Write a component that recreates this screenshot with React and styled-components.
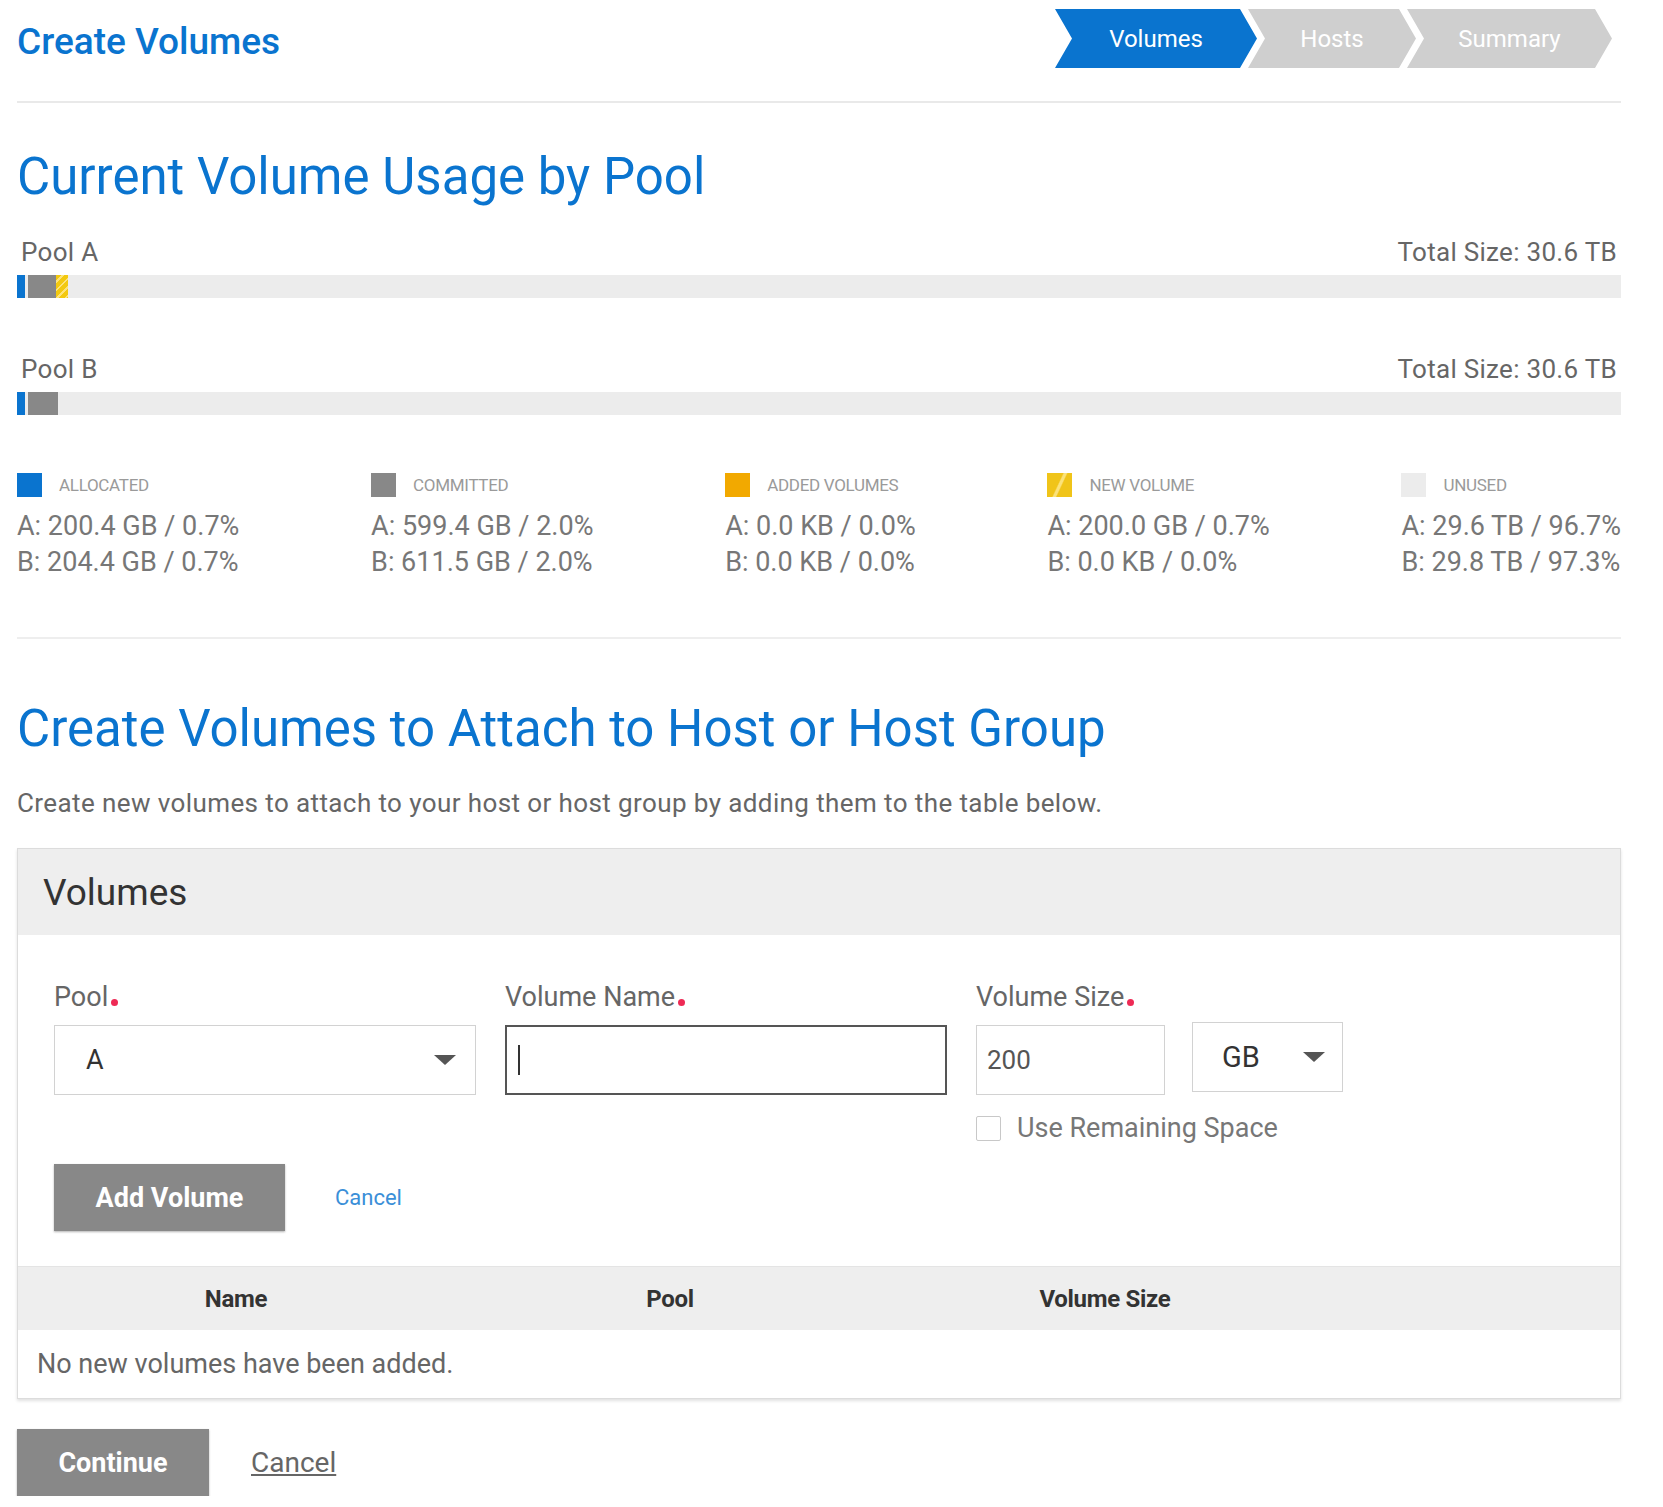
import React from "react";
import styled, { createGlobalStyle } from "styled-components";

const BLUE = "#0a74cf";

const GlobalStyle = createGlobalStyle`
  html, body { margin: 0; padding: 0; background: #fff; }
  body { font-family: Roboto, "Liberation Sans", Arial, sans-serif; color: #555; }
  * { box-sizing: border-box; }
`;

const Page = styled.div`
  width: 1663px;
  padding: 0 42px 0 17px;
`;

const Header = styled.header`
  display: flex;
  justify-content: space-between;
  align-items: flex-start;
  height: 103px;
  padding-top: 9px;
  border-bottom: 2px solid #e9e9e9;
`;

const PageTitle = styled.h1`
  margin: 12px 0 0;
  font-size: 37px;
  line-height: 42px;
  font-weight: 500;
  color: ${BLUE};
`;

const Steps = styled.nav`
  display: flex;
  margin-right: 9px;
`;

const Step = styled.div`
  width: ${(p) => p.$w}px;
  height: 59px;
  display: flex;
  align-items: center;
  justify-content: center;
  background: ${(p) => (p.$active ? BLUE : "#cfcfcf")};
  color: #fff;
  font-size: 24px;
  clip-path: polygon(0 0, calc(100% - 17px) 0, 100% 50%, calc(100% - 17px) 100%, 0 100%, 17px 50%);
  & + & { margin-left: -9px; }
`;

const SectionTitle = styled.h2`
  margin: ${(p) => p.$mt}px 0 0;
  font-size: 51px;
  line-height: 58px;
  font-weight: 400;
  color: ${BLUE};
`;

const PoolBlock = styled.div`
  margin-top: ${(p) => p.$mt}px;
`;

const PoolHead = styled.div`
  display: flex;
  justify-content: space-between;
  padding: 0 4px;
  font-size: 26px;
  line-height: 30px;
  letter-spacing: 0.3px;
  color: #666;
`;

const Bar = styled.div`
  display: flex;
  height: 23px;
  margin-top: 8px;
  background: #ececec;
`;

const Segment = styled.div`
  width: ${(p) => p.$w}px;
  margin-right: ${(p) => p.$gap || 0}px;
  background: ${(p) => p.$bg};
`;

const Legend = styled.div`
  display: flex;
  justify-content: space-between;
  margin-top: 58px;
`;

const LegendItem = styled.div`
  display: flex;
  flex-direction: column;
`;

const LegendHead = styled.div`
  display: flex;
  align-items: center;
  gap: 17px;
  height: 24px;
`;

const Swatch = styled.span`
  width: 25px;
  height: 24px;
  background: ${(p) => p.$bg};
`;

const LegendLabel = styled.span`
  font-size: 17px;
  color: #9a9a9a;
  text-transform: uppercase;
  letter-spacing: -0.3px;
`;

const LegendValues = styled.div`
  margin-top: 11px;
  font-size: 27px;
  line-height: 36px;
  color: #777;
  white-space: nowrap;
`;

const Divider = styled.hr`
  margin: 57px 0 0;
  border: 0;
  height: 2px;
  background: #eeeeee;
`;

const Description = styled.p`
  margin: 29px 0 0;
  font-size: 26px;
  line-height: 32px;
  color: #666;
  letter-spacing: 0.4px;
`;

const Panel = styled.section`
  margin-top: 29px;
  border: 1px solid #dcdcdc;
  box-shadow: 0 2px 3px rgba(0, 0, 0, 0.12);
  background: #fff;
`;

const PanelHeader = styled.div`
  height: 86px;
  display: flex;
  align-items: center;
  padding-left: 25px;
  background: #eeeeee;
  font-size: 37px;
  color: #333;
`;

const Form = styled.div`
  padding: 47px 36px 35px;
`;

const FieldRow = styled.div`
  display: flex;
  gap: 29px;
  align-items: flex-start;
`;

const Field = styled.div`
  display: flex;
  flex-direction: column;
`;

const Label = styled.label`
  display: block;
  margin-bottom: 13px;
  font-size: 27px;
  line-height: 30px;
  color: #666;
`;

const Required = styled.span`
  display: inline-block;
  width: 7px;
  height: 7px;
  margin-left: 3px;
  border-radius: 50%;
  background: #ee2a55;
`;

const SelectBox = styled.div`
  width: ${(p) => p.$w}px;
  height: 70px;
  display: flex;
  align-items: center;
  justify-content: space-between;
  padding: 0 ${(p) => p.$pr}px 0 ${(p) => p.$pl}px;
  border: 1px solid #d2d2d2;
  background: #fff;
  font-size: ${(p) => p.$fs}px;
  color: #333;
  margin-top: ${(p) => p.$mt || 0}px;
`;

const Arrow = styled.span`
  width: 0;
  height: 0;
  border-left: 11px solid transparent;
  border-right: 11px solid transparent;
  border-top: 10px solid #555;
`;

const TextBox = styled.div`
  width: ${(p) => p.$w}px;
  height: 70px;
  display: flex;
  align-items: center;
  padding-left: ${(p) => p.$pl}px;
  border: ${(p) => (p.$focused ? "2px solid #555" : "1px solid #d2d2d2")};
  background: #fff;
  font-size: 26px;
  color: #555;
`;

const Caret = styled.span`
  width: 2px;
  height: 30px;
  background: #333;
`;

const SizeInputs = styled.div`
  display: flex;
  gap: 27px;
  align-items: flex-start;
`;

const CheckRow = styled.label`
  display: flex;
  align-items: center;
  gap: 16px;
  margin-top: 18px;
  font-size: 27px;
  line-height: 30px;
  color: #777;
`;

const CheckBox = styled.span`
  width: 25px;
  height: 25px;
  border: 1px solid #c8c8c8;
  border-radius: 2px;
  background: #fff;
`;

const ActionRow = styled.div`
  display: flex;
  align-items: center;
  gap: ${(p) => p.$gap}px;
  margin-top: ${(p) => p.$mt}px;
`;

const Button = styled.button`
  width: ${(p) => p.$w}px;
  height: 67px;
  border: 0;
  background: #888;
  color: #fff;
  font-family: inherit;
  font-size: 27px;
  font-weight: 700;
  box-shadow: 0 1px 2px rgba(0, 0, 0, 0.3);
`;

const LinkButton = styled.button`
  border: 0;
  padding: 0;
  background: none;
  font-family: inherit;
  font-size: ${(p) => p.$fs}px;
  color: ${(p) => p.$color};
  text-decoration: ${(p) => (p.$underline ? "underline" : "none")};
`;

const TableHead = styled.div`
  display: grid;
  grid-template-columns: 436px 432px 438px 1fr;
  align-items: center;
  height: 64px;
  background: #eeeeee;
  border-top: 1px solid #e4e4e4;
  font-size: 24px;
  font-weight: 700;
  color: #333;
  text-align: center;
  letter-spacing: -0.3px;
`;

const EmptyRow = styled.div`
  height: 68px;
  display: flex;
  align-items: center;
  padding-left: 19px;
  font-size: 27px;
  color: #666;
`;

const legend = [
  { label: "Allocated", bg: BLUE, a: "A: 200.4 GB / 0.7%", b: "B: 204.4 GB / 0.7%" },
  { label: "Committed", bg: "#888888", a: "A: 599.4 GB / 2.0%", b: "B: 611.5 GB / 2.0%" },
  { label: "Added Volumes", bg: "#f2a900", a: "A: 0.0 KB / 0.0%", b: "B: 0.0 KB / 0.0%" },
  {
    label: "New Volume",
    bg: "linear-gradient(115deg, #f0c419 0 44%, #fbe27a 48% 54%, #f0c419 58% 100%)",
    a: "A: 200.0 GB / 0.7%",
    b: "B: 0.0 KB / 0.0%",
  },
  { label: "Unused", bg: "#ececec", a: "A: 29.6 TB / 96.7%", b: "B: 29.8 TB / 97.3%" },
];

const HATCH = "repeating-linear-gradient(135deg, #f3c90f 0 4px, #fde37a 4px 6px)";

const pools = [
  {
    name: "Pool A",
    mt: 31,
    segs: [
      { w: 8, bg: BLUE, gap: 3 },
      { w: 28, bg: "#888888" },
      { w: 12, bg: HATCH },
    ],
  },
  {
    name: "Pool B",
    mt: 56,
    segs: [
      { w: 8, bg: BLUE, gap: 3 },
      { w: 30, bg: "#888888" },
    ],
  },
];

export default function App() {
  return (
    <Page>
      <GlobalStyle />
      <Header>
        <PageTitle>Create Volumes</PageTitle>
        <Steps>
          <Step $w={202} $active>Volumes</Step>
          <Step $w={168}>Hosts</Step>
          <Step $w={205}>Summary</Step>
        </Steps>
      </Header>

      <SectionTitle $mt={45}>Current Volume Usage by Pool</SectionTitle>

      {pools.map((p) => (
        <PoolBlock key={p.name} $mt={p.mt}>
          <PoolHead>
            <span>{p.name}</span>
            <span>Total Size: 30.6 TB</span>
          </PoolHead>
          <Bar>
            {p.segs.map((s, i) => (
              <Segment key={i} $w={s.w} $bg={s.bg} $gap={s.gap} />
            ))}
          </Bar>
        </PoolBlock>
      ))}

      <Legend>
        {legend.map((l) => (
          <LegendItem key={l.label}>
            <LegendHead>
              <Swatch $bg={l.bg} />
              <LegendLabel>{l.label}</LegendLabel>
            </LegendHead>
            <LegendValues>
              <div>{l.a}</div>
              <div>{l.b}</div>
            </LegendValues>
          </LegendItem>
        ))}
      </Legend>

      <Divider />

      <SectionTitle $mt={61}>Create Volumes to Attach to Host or Host Group</SectionTitle>
      <Description>
        Create new volumes to attach to your host or host group by adding them to the table below.
      </Description>

      <Panel>
        <PanelHeader>Volumes</PanelHeader>
        <Form>
          <FieldRow>
            <Field>
              <Label>
                Pool<Required />
              </Label>
              <SelectBox $w={422} $pl={31} $pr={19} $fs={27}>
                <span>A</span>
                <Arrow />
              </SelectBox>
            </Field>
            <Field>
              <Label>
                Volume Name<Required />
              </Label>
              <TextBox $w={442} $pl={11} $focused>
                <Caret />
              </TextBox>
            </Field>
            <Field>
              <Label>
                Volume Size<Required />
              </Label>
              <SizeInputs>
                <TextBox $w={189} $pl={10}>200</TextBox>
                <SelectBox $w={151} $pl={29} $pr={17} $fs={29} $mt={-3}>
                  <span>GB</span>
                  <Arrow />
                </SelectBox>
              </SizeInputs>
              <CheckRow>
                <CheckBox />
                Use Remaining Space
              </CheckRow>
            </Field>
          </FieldRow>
          <ActionRow $gap={50} $mt={21}>
            <Button $w={231}>Add Volume</Button>
            <LinkButton $fs={22} $color="#3b8fd8">Cancel</LinkButton>
          </ActionRow>
        </Form>
        <TableHead>
          <span>Name</span>
          <span>Pool</span>
          <span>Volume Size</span>
          <span />
        </TableHead>
        <EmptyRow>No new volumes have been added.</EmptyRow>
      </Panel>

      <ActionRow $gap={42} $mt={30}>
        <Button $w={192}>Continue</Button>
        <LinkButton $fs={28} $color="#666" $underline>
          Cancel
        </LinkButton>
      </ActionRow>
    </Page>
  );
}
